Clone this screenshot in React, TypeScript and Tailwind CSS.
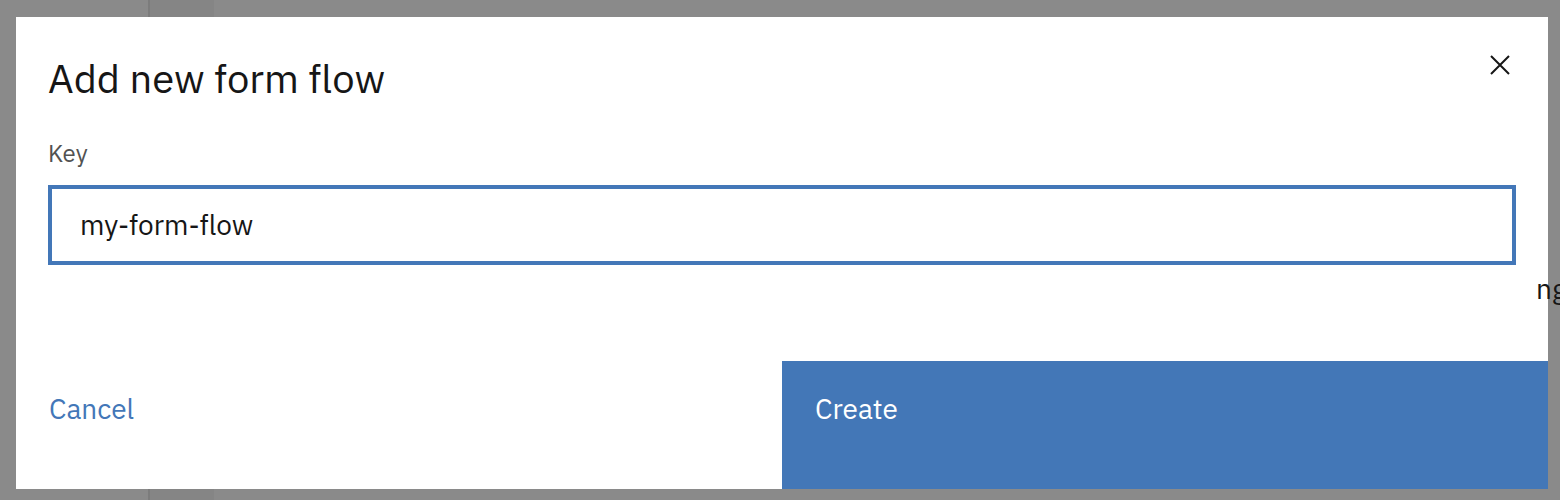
import React from 'react';

const font = { fontFamily: '"IBM Plex Sans", "Noto Sans", "Open Sans", sans-serif' };

const CloseIcon: React.FC = () => (
  <svg width="20" height="20" viewBox="0 0 20 20" fill="none">
    <path d="M1 1L19 19M19 1L1 19" stroke="#161616" strokeWidth="2" />
  </svg>
);

const App: React.FC = () => {
  return (
    <div className="relative h-[500px] w-full overflow-hidden bg-[#8a8a8a]" style={font}>
      {/* page behind the overlay */}
      <div className="flex h-full">
        <div className="w-[148px]" />
        <div className="w-[2px] bg-[#7c7c7c]" />
        <div className="w-[64px] bg-[#858585]" />
        <div className="flex-1" />
      </div>

      <div className="absolute left-[16px] top-[17px] flex h-[472px] w-[1532px] flex-col bg-white">
        <div className="relative pl-[32px] pr-[38px] pt-[33px]">
          <h2 className="text-[40px] font-normal leading-[56px] text-[#161616]">Add new form flow</h2>
          <button className="absolute right-[38px] top-[38px] flex h-[20px] w-[20px] items-center justify-center">
            <CloseIcon />
          </button>
        </div>

        <div className="px-[32px] pt-[31px]">
          <label className="block text-[24px] leading-[32px] text-[#525252]">Key</label>
          <div className="mt-[16px] flex h-[80px] items-center border-[4px] border-[#4377b8] px-[28px]">
            <span className="text-[28px] leading-[36px] text-[#161616]">my-form-flow</span>
          </div>
        </div>

        <div className="mt-auto flex h-[128px]">
          <button className="flex w-1/2 items-start bg-white pl-[33px] pt-[30px] text-left text-[28px] leading-[36px] text-[#4377b8]">
            Cancel
          </button>
          <button className="flex w-1/2 items-start bg-[#4377b7] pl-[33px] pt-[30px] text-left text-[28px] leading-[36px] text-white">
            Create
          </button>
        </div>
      </div>

      <span className="absolute left-[1536px] top-[271px] text-[28px] leading-[36px] text-[#161616]">ng</span>
    </div>
  );
};

export default App;
